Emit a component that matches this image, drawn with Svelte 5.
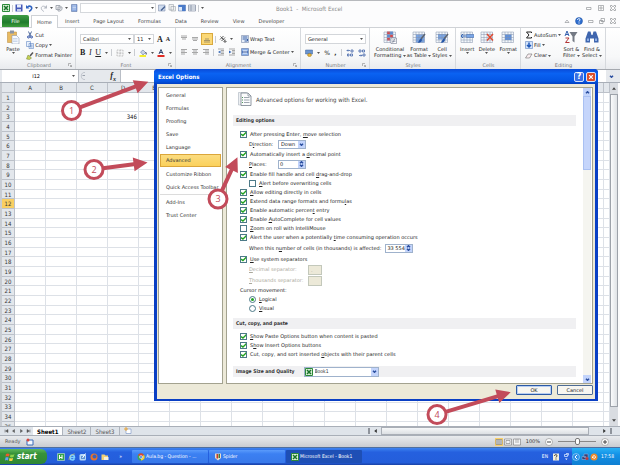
<script>
	const tabs = ['Insert', 'Page Layout', 'Formulas', 'Data', 'Review', 'View', 'Developer'];
	const columns = 'ABCDEFGHIJKLMNOPQRS'.split('');
	const rows = Array.from({ length: 35 }, (_, i) => i + 1);

	const sections = ['General', 'Formulas', 'Proofing', 'Save', 'Language', 'Advanced'];
	const more = ['Customize Ribbon', 'Quick Access Toolbar'];
	const last = ['Add-Ins', 'Trust Center'];

	// the letter between the bars is the access key
	const editing = [
		{ text: '|A|llow editing directly in cells', on: true },
		{ text: 'Extend data range formats and formu|l|as', on: true },
		{ text: 'Enable automatic percen|t| entry', on: true },
		{ text: 'Enable |A|utoComplete for cell values', on: true },
		{ text: '|Z|oom on roll with IntelliMouse', on: false },
		{ text: 'Alert the user when a potentially |t|ime consuming operation occurs', on: true }
	];
	const pasting = [
		{ text: '|S|how Paste Options button when content is pasted', on: true },
		{ text: 'S|h|ow Insert Options buttons', on: true },
		{ text: 'Cut, copy, and sort inserted |o|bjects with their parent cells', on: true }
	];

	const callouts = [
		{ n: 1, x: 71.5, y: 110.5, angle: -20.5, length: 82 },
		{ n: 2, x: 94, y: 169.5, angle: -7.4, length: 54 },
		{ n: 3, x: 218, y: 199, angle: -65, length: 46 },
		{ n: 4, x: 437, y: 414.5, angle: -16.8, length: 77 }
	];
</script>

{#snippet key(text)}
	{@const part = text.split('|')}
	{part[0]}<u>{part[1]}</u>{part[2]}
{/snippet}

{#snippet check(item)}
	<label class="row"><input type="checkbox" checked={item.on} /><span>{@render key(item.text)}</span></label>
{/snippet}

{#snippet caret()}
	<svg class="caret" viewBox="0 0 3 2"><path d="M0 0h3L1.500 2z" /></svg>
{/snippet}

{#snippet chevron(up = false)}
	<svg class="chevron" viewBox="0 0 6 4"><path d={up ? 'M1 3l2-2 2 2' : 'M1 1l2 2 2-2'} /></svg>
{/snippet}

{#snippet excel()}
	<svg class="i8" viewBox="0 0 16 16">
		<path d="M1 1h14v14H1z" fill="#d9f0d5" stroke="#2c8a3a" stroke-width="2" />
		<path d="M4 4l8 8M12 4l-8 8" stroke="#18722a" stroke-width="3" />
	</svg>
{/snippet}

{#snippet lines(kind)}
	<svg class="i8" viewBox="0 0 16 16">
		{#if kind === 'top'}
			<path d="M2 2h12M2 5h12M4 8h8" />
		{:else if kind === 'middle'}
			<path d="M2 5h12M2 8h12M4 11h8" />
		{:else if kind === 'bottom'}
			<path d="M4 8h8M2 11h12M2 14h12" />
		{:else if kind === 'left'}
			<path d="M2 3h12M2 6h8M2 9h12M2 12h8" />
		{:else if kind === 'center'}
			<path d="M2 3h12M4 6h8M2 9h12M4 12h8" />
		{:else if kind === 'right'}
			<path d="M2 3h12M6 6h8M2 9h12M6 12h8" />
		{:else}
			<path d="M2 2h12M8 5h6M8 8h6M8 11h6M2 14h12" />
			<path class="dent" d={kind === 'outdent' ? 'M7 5v6L2 8z' : 'M2 5v6l5-3z'} />
		{/if}
	</svg>
{/snippet}

{#snippet sheetIcon(kind)}
	<svg class="i14" viewBox="0 0 28 28">
		<path d="M2 4h23v21H2z" fill="#f3f7fc" />
		{#if kind === 'conditional'}
			<path d="M8 3h6v6H8zM14 9h6v6h-6zM8 15h6v6H8z" fill="#d9474c" />
			<path d="M14 3h6v6h-6zM8 9h6v6H8z" fill="#5b8ad6" />
		{:else if kind === 'table'}
			<path d="M8 9h17v16H8z" fill="#79a5e6" />
		{:else if kind === 'style'}
			<path d="M6 8h16v11H6z" fill="#79a5e6" />
		{:else if kind === 'format'}
			<path d="M8 9h13v11H8z" fill="#5d90de" />
		{/if}
		<path d="M2 4h23v21H2zM2 9h23M2 15h23M2 20h23M8 4v21M14 4v21M20 4v21" fill="none" stroke="#8291ab" />
		{#if kind === 'table' || kind === 'style'}
			<path d="M26 8l-8 10" stroke="#5c6470" stroke-width="3" />
			<path d="M18 17c-4 1-3 6-7 8 5 1 9-1 9-6z" fill="#2456a8" />
		{:else if kind === 'insert'}
			<path d="M13 9h15v6H13z" fill="#79a5e6" stroke="#456ba6" />
			<path d="M2 12h10M6 8l-4 4 4 4" stroke="#3668b8" stroke-width="2" fill="none" />
		{:else if kind === 'delete'}
			<path d="M14 8l12 13M26 8L14 21" stroke="#df4a32" stroke-width="3" />
		{:else if kind === 'conditional'}
			<path d="M16 16h11v11H16z" fill="#fff" stroke="#59657c" />
			<path d="M18 20h7M18 23h7M24 17l-5 9" stroke="#59657c" />
		{/if}
	</svg>
{/snippet}

{#snippet launcher()}
	<svg class="launcher" viewBox="0 0 8 8"><path d="M1 6V1h5M4 4l3 3M7 4v3H4" /></svg>
{/snippet}

<div class="desktop">
	<header class="titlebar">
		<div class="quick">
			{@render excel()}
			<i></i>
			<svg class="i8" viewBox="0 0 16 16"><path d="M1 1h14v14H1z" fill="#4659b8" /><path d="M4 1h8v6H4z" fill="#e9eefb" /><path d="M4 10h8v5H4z" fill="#c3cbea" /></svg>
			<svg class="i8" viewBox="0 0 16 16"><path d="M2 2v7h7z" fill="#2f63c0" /><path d="M5 6c5-4 10 0 8 4-1 3-3 4-5 5" fill="none" stroke="#2f63c0" stroke-width="3" /></svg>
			{@render caret()}
			<svg class="i8" viewBox="0 0 16 16"><path d="M14 2v7H7z" fill="#b5bac3" /><path d="M11 6C6 2 1 6 3 10c1 3 3 4 5 5" fill="none" stroke="#b5bac3" stroke-width="2" /></svg>
			{@render caret()}
			<svg class="i8" viewBox="0 0 16 16"><path d="M2 3h8v8H2zM6 6h8v5l-4 3H6z" fill="#f0f1f3" stroke="#a5aab3" stroke-width="2" /></svg>
			{@render caret()}
			<svg class="i8" viewBox="0 0 16 16"><path d="M3 1h11v14H3z" fill="#87a7df" stroke="#4e6799" /><path d="M5 4h7M5 7h7M5 10h7" stroke="#fff" /></svg>
			<div class="qcombo">{@render caret()}</div>
			<svg class="i8" viewBox="0 0 16 16"><path d="M1 2h13v12H1z" fill="#cfdcef" stroke="#6e7f9e" /><path d="M14 5L6 13" stroke="#47618f" stroke-width="3" /></svg>
			<svg class="i8" viewBox="0 0 16 16"><path d="M2 1h9v11H2zM6 5h9v9H6z" fill="#f1f1f1" stroke="#8d949f" /></svg>
			<svg class="i8" viewBox="0 0 16 16"><path d="M1 2h14v12H1z" fill="#dbe8fa" stroke="#5471a5" /><path d="M1 2h14v4H1zM8 6h7v8H8z" fill="#4b7bc9" /></svg>
			<svg class="i8" viewBox="0 0 16 16"><path d="M1 2h14v12H1z" fill="#f4f7fb" stroke="#5b6780" /><path d="M1 6h14M1 10h14M6 2v12" stroke="#5b6780" /></svg>
			<i></i>
			{@render caret()}
		</div>
		<h1>Book1 &nbsp;-&nbsp; Microsoft Excel</h1>
		<div class="winbuttons">
			<svg class="i6" viewBox="0 0 12 12"><path d="M1 5h9v4H1z" /></svg>
			<svg class="i6" viewBox="0 0 12 12"><path d="M1 1h10v10H1zM4 4h4v4H4z" /></svg>
			<svg class="i6" viewBox="0 0 12 12"><path d="M1 1h3l2 3 2-3h3v3L8 6l3 2v3H8L6 8l-2 3H1V8l3-2-3-2z" /></svg>
		</div>
	</header>

	<nav class="tabs">
		<button class="file">File</button>
		<button class="home">Home</button>
		{#each tabs as tab}<button>{tab}</button>{/each}
		<div class="winbuttons">
			<svg class="i6" viewBox="0 0 12 12"><path d="M2 9l4-5 4 5z" /></svg>
			<svg class="i8 about" viewBox="0 0 16 16"><circle cx="8" cy="8" r="7" fill="#2e6fd0" stroke="#1d4f9e" /><path d="M5 6c0-4 6-3 5 0 0 1-2 2-2 3M8 11v2" stroke-width="2" /></svg>
			<svg class="i6" viewBox="0 0 12 12"><path d="M1 5h9v4H1z" /></svg>
			<svg class="i6" viewBox="0 0 12 12"><path d="M4 1h7v6H4zM1 5h7v6H1z" /></svg>
			<svg class="i6" viewBox="0 0 12 12"><path d="M1 1h3l2 3 2-3h3v3L8 6l3 2v3H8L6 8l-2 3H1V8l3-2-3-2z" /></svg>
		</div>
	</nav>

	<div class="ribbon">
		<section class="group clipboard">
			<div class="tools">
				<button class="big">
					<svg class="i14" viewBox="0 0 28 28">
						<path d="M3 4h18v21H3z" fill="#e9bb62" stroke="#b4873a" />
						<path d="M8 1h8v6H8z" fill="#8a94a6" />
						<path d="M12 11h9l5 5v12H12z" fill="#f7faff" stroke="#7d8da8" />
						<path d="M14 17h9M14 20h9M14 23h9" stroke="#9fb4d6" />
					</svg>
					Paste {@render caret()}
				</button>
				<div class="stack">
					<button><svg class="i8" viewBox="0 0 16 16"><path d="M5 1l4 9M11 1L7 10" stroke="#506a9c" stroke-width="2" /><circle cx="5" cy="12" r="2" fill="none" stroke="#2d4fa6" stroke-width="2" /><circle cx="11" cy="12" r="2" fill="none" stroke="#2d4fa6" stroke-width="2" /></svg>Cut</button>
					<button><svg class="i8" viewBox="0 0 16 16"><path d="M1 1h8v10H1zM6 5h9v10H6z" fill="#eaf2fd" stroke="#4a74b8" /><path d="M8 8h5M8 10h5M8 12h5" stroke="#4a74b8" /></svg>Copy {@render caret()}</button>
					<button><svg class="i8" viewBox="0 0 16 16"><path d="M14 1L8 8" stroke="#555" stroke-width="3" /><path d="M4 6l7 6-4 3-6-1z" fill="#c4d154" stroke="#75802c" /></svg>Format Painter</button>
				</div>
			</div>
			<footer>Clipboard {@render launcher()}</footer>
		</section>

		<section class="group font">
			<div class="tools column">
				<div class="line">
					<div class="combo wide"><span>Calibri</span>{@render caret()}</div>
					<div class="combo size"><span>11</span>{@render caret()}</div>
					<b class="grow">A</b><b class="shrink">A</b>
				</div>
				<div class="line spread">
					<button class="serif"><b>B</b></button>
					<button class="serif"><em>I</em></button>
					<button class="serif"><u>U</u></button>
					{@render caret()}<i></i>
					<svg class="i8" viewBox="0 0 16 16"><path d="M2 2h12v12H2zM8 2v12M2 8h12" fill="none" stroke="#888" stroke-dasharray="2 1" /></svg>
					{@render caret()}<i></i>
					<svg class="i8" viewBox="0 0 16 16"><path d="M3 6l5-4 5 5-5 5z" fill="#c9d3e4" stroke="#526a96" /><path d="M13 6c3 2 2 5 1 5z" fill="#2f63c0" /><path d="M1 12h13v4H1z" fill="#f5ee2e" stroke="none" /></svg>
					{@render caret()}
					<svg class="i8" viewBox="0 0 16 16"><path d="M4 10l4-9 4 9M5 7h6" fill="none" stroke="#34466e" stroke-width="2" /><path d="M1 12h14v4H1z" fill="#e02a22" stroke="none" /></svg>
					{@render caret()}
				</div>
			</div>
			<footer>Font {@render launcher()}</footer>
		</section>

		<section class="group alignment">
			<div class="tools column">
				<div class="line">
					{@render lines('top')}{@render lines('middle')}<span class="hot">{@render lines('bottom')}</span><i></i>
					<svg class="i8" viewBox="0 0 16 16"><path d="M2 9l7-7M5 12l7-7M3 3l8 8M12 9v5M9 12l3 3 3-3" fill="none" stroke="#555" stroke-width="2" /></svg>
					{@render caret()}
					<button class="right"><svg class="i8" viewBox="0 0 16 16"><path d="M1 1h14v14H1z" fill="#e8effa" stroke="#5e7299" /><path d="M3 4h10M3 8h10v4H7" fill="none" stroke="#335ca5" stroke-width="2" /></svg>Wrap Text</button>
				</div>
				<div class="line">
					{@render lines('left')}{@render lines('center')}{@render lines('right')}<i></i>
					{@render lines('outdent')}{@render lines('indent')}
					<button class="right"><svg class="i8" viewBox="0 0 16 16"><path d="M1 1h14v14H1z" fill="#8cb0e8" stroke="#4a6394" /><path d="M4 5h8v6H4z" fill="#fff" /><path d="M2 8h12" stroke="#1e4796" stroke-width="2" /></svg>Merge &amp; Center {@render caret()}</button>
				</div>
			</div>
			<footer>Alignment {@render launcher()}</footer>
		</section>

		<section class="group number">
			<div class="tools column">
				<div class="combo"><span>General</span>{@render caret()}</div>
				<div class="line spread">
					<svg class="i8" viewBox="0 0 16 16"><path d="M1 2h14v8H1z" fill="#6a94cf" stroke="#3d609a" /><ellipse cx="9" cy="12" rx="4" ry="3" fill="#e6b53d" stroke="#94701a" /></svg>
					{@render caret()}
					<span class="percent">%</span><b class="percent">,</b><i></i>
					<svg class="i8" viewBox="0 0 16 16"><path d="M8 3H2M4 1L2 3l2 2M10 2h4v4h-4zM3 10h3v4H3zM9 10h4v4H9z" fill="none" stroke="#3b5fa5" stroke-width="1.500" /></svg>
					<svg class="i8" viewBox="0 0 16 16"><path d="M2 13h6M6 11l2 2-2 2M2 2h4v4H2zM9 2h4v4H9zM10 10h4v4h-4z" fill="none" stroke="#3b5fa5" stroke-width="1.500" /></svg>
				</div>
			</div>
			<footer>Number {@render launcher()}</footer>
		</section>

		<section class="group styles">
			<div class="tools">
				<button class="big">{@render sheetIcon('conditional')}Conditional<span>Formatting {@render caret()}</span></button>
				<button class="big">{@render sheetIcon('table')}Format<span>as Table {@render caret()}</span></button>
				<button class="big">{@render sheetIcon('style')}Cell<span>Styles {@render caret()}</span></button>
			</div>
			<footer>Styles</footer>
		</section>

		<section class="group cells">
			<div class="tools">
				<button class="big">{@render sheetIcon('insert')}Insert {@render caret()}</button>
				<button class="big">{@render sheetIcon('delete')}Delete {@render caret()}</button>
				<button class="big">{@render sheetIcon('format')}Format {@render caret()}</button>
			</div>
			<footer>Cells</footer>
		</section>

		<section class="group edit">
			<div class="tools">
				<div class="stack">
					<button><svg class="i8" viewBox="0 0 16 16"><path d="M13 4V2H3l5 6-5 6h10v-2" fill="none" stroke="#222" stroke-width="2" /></svg>AutoSum {@render caret()}</button>
					<button><svg class="i8" viewBox="0 0 16 16"><path d="M1 1h14v14H1z" fill="#d3e3fa" stroke="#4470b4" /><path d="M8 3v9M4 8l4 4 4-4" fill="none" stroke="#1f58b8" stroke-width="3" /></svg>Fill {@render caret()}</button>
					<button><svg class="i8" viewBox="0 0 16 16"><path d="M6 4h8l-5 8H1z" fill="#fbeef1" stroke="#555" /></svg>Clear {@render caret()}</button>
				</div>
				<button class="big">
					<svg class="i14" viewBox="0 0 28 28"><path d="M2 12L6 2l4 10M4 9h5" fill="none" stroke="#3560ae" stroke-width="2" /><path d="M3 16h7L3 25h8" fill="none" stroke="#b23636" stroke-width="2" /><path d="M11 4h16l-6 9v12l-4-3v-9z" fill="#747a84" /></svg>
					Sort &amp;<span>Filter {@render caret()}</span>
				</button>
				<button class="big">
					<svg class="i14" viewBox="0 0 28 28"><path d="M6 3h5l2 7h2l2-7h5l5 14v8h-9v-8h-8v8H1v-8z" fill="#3f66ae" /><path d="M4 17h4v5H4zM20 17h4v5h-4z" fill="#8fb0e6" /></svg>
					Find &amp;<span>Select {@render caret()}</span>
				</button>
			</div>
			<footer>Editing</footer>
		</section>
	</div>

	<div class="formula">
		<div class="name"><span>I12</span>{@render caret()}</div>
		<div class="fx"><svg class="i8" viewBox="0 0 16 16"><path d="M12 1C2 0 2 16 12 15" fill="none" stroke="#9aa1ac" /><path d="M7 7h5" stroke="#9aa1ac" stroke-width="2" /></svg><em>f<sub>x</sub></em></div>
		<input aria-label="Formula" />
		<div class="expand">{@render chevron()}</div>
	</div>

	<div class="sheet">
		<div class="grid">
			<table>
				<thead>
					<tr>
						<th class="corner"></th>
						{#each columns as c}<th>{c}</th>{/each}
						<th class="rest"></th>
					</tr>
				</thead>
				<tbody>
					{#each rows as r}
						<tr class:current={r === 12}>
							<th>{r}</th>
							{#each columns as c}<td>{r === 3 && c === 'D' ? '346' : ''}</td>{/each}
							<td></td>
						</tr>
					{/each}
				</tbody>
			</table>
		</div>
		<div class="vscroll">
			<span class="end"><svg viewBox="0 0 6 4"><path d="M0 4h6L3 0z" /></svg></span>
			<div class="thumb"></div>
			<span class="end"><svg viewBox="0 0 6 4"><path d="M0 0h6L3 4z" /></svg></span>
		</div>
	</div>

	<div class="sheettabs">
		<svg class="navs" viewBox="0 0 54 8"><path d="M2 1v6M8 1v6L3 4zM21 1v6l-4-3zM33 1v6l4-3zM46 1v6l5-3zM52 1v6" /></svg>
		<button class="active">Sheet1</button>
		<button>Sheet2</button>
		<button>Sheet3</button>
		<svg class="i8 new" viewBox="0 0 16 16"><path d="M4 4h10v9H4z" fill="#fff" stroke="#5c7fb8" /><path d="M4 0v8M0 4h8" stroke="#e9a63a" stroke-width="2" /></svg>
		<div class="hscroll">
			<span class="grip"></span>
			<svg viewBox="0 0 4 6"><path d="M4 0v6L0 3z" /></svg>
			<div class="thumb"></div>
			<svg viewBox="0 0 4 6"><path d="M0 0v6l4-3z" /></svg>
			<span class="grip"></span>
		</div>
	</div>

	<div class="status">
		<span>Ready</span>
		<svg class="i8" viewBox="0 0 16 16"><path d="M2 4h12v10H2z" fill="#f3f8ff" stroke="#3b6cb8" stroke-width="2" /><circle cx="4" cy="4" r="3" fill="#d8453d" /></svg>
		<div class="views">
			<svg class="i8 lit" viewBox="0 0 16 16"><path d="M2 3h12v10H2zM2 6h12M2 10h12M6 3v10M10 3v10" /></svg>
			<svg class="i8" viewBox="0 0 16 16"><path d="M1 2h14v12H1zM4 5h8v6H4z" /></svg>
			<svg class="i8" viewBox="0 0 16 16"><path d="M1 2h14v12H1zM6 2v8M10 2v8" /></svg>
		</div>
		<span class="zoom">100%</span>
		<svg class="i8" viewBox="0 0 16 16"><circle cx="8" cy="8" r="7" fill="#fff" stroke="#777" /><path d="M4 8h8" stroke="#444" stroke-width="2" /></svg>
		<div class="slider"><span></span></div>
		<svg class="i8" viewBox="0 0 16 16"><circle cx="8" cy="8" r="7" fill="#fff" stroke="#777" /><path d="M4 8h8M8 4v8" stroke="#444" stroke-width="2" /></svg>
	</div>

	<div class="taskbar">
		<button class="start">
			<svg class="i10" viewBox="0 0 20 20"><path d="M2 4c3-2 5-1 7 0L8 9C6 8 4 8 1 9z" fill="#ee5a2c" /><path d="M11 5c3 1 5 1 8-1l-2 6c-3 1-5 1-7 0z" fill="#8ad24b" /><path d="M1 11c2-1 4-1 6 0l-1 6c-2-2-4-1-6 0z" fill="#64a2f5" /><path d="M9 12c2 1 4 1 7 0l-1 5c-3 2-5 1-7 0z" fill="#fbd13e" /></svg>
			start
		</button>
		<div class="launch">
			<svg class="i8" viewBox="0 0 16 16"><path d="M1 1h14v14H1z" fill="#35a348" stroke="#e6f5e4" /><path d="M5 4v8M5 9h5V4M10 8v4" fill="none" stroke="#fff" stroke-width="2" /></svg>
			<svg class="i8" viewBox="0 0 16 16"><path d="M13 11c-3 5-9 3-9-2 0-7 9-7 9 0H5" fill="none" stroke="#7fd0ff" stroke-width="3" /><path d="M2 14C1 8 9 1 14 2" fill="none" stroke="#f3c643" /></svg>
			<svg class="i8" viewBox="0 0 16 16"><rect x="1" y="2" width="13" height="13" rx="3" fill="#b8d8f7" /><path d="M4 6h8v6H4z" fill="#5d93d4" /><path d="M13 1L7 10" stroke="#fff" stroke-width="2" /></svg>
			<svg class="i8" viewBox="0 0 16 16"><circle cx="8" cy="8" r="7" fill="#e8732a" /><circle cx="9" cy="7" r="4" fill="#3b62bd" /></svg>
			<svg class="i8" viewBox="0 0 16 16"><path d="M1 3h6l2 2h5v9H1z" fill="#f3d176" /><path d="M6 8h9v6H6z" fill="#f6f0dd" /></svg>
			<span class="more">»</span>
		</div>
		<button class="task"><svg class="i8" viewBox="0 0 16 16"><circle cx="8" cy="8" r="7" fill="#3ba757" /><path d="M8 8L2 4a7 7 0 0 1 12 0z" fill="#df4435" /><path d="M8 8l6-4a7 7 0 0 1-6 11z" fill="#f7cc3c" /><circle cx="8" cy="8" r="3" fill="#4a87ee" stroke="#fff" /></svg>Aula.bg - Question - ...</button>
		<button class="task"><svg class="i8" viewBox="0 0 16 16"><path d="M2 1h12v9l-6 5-6-5z" fill="#e9ddc9" /><path d="M5 2h3v9H5z" fill="#c33c2d" /><path d="M9 2h3v8H9z" fill="#3e7a3c" /></svg>Spider</button>
		<button class="task pressed">{@render excel()}Microsoft Excel - Book1</button>
		<span class="lang">EN</span>
		<svg class="i8" viewBox="0 0 16 16"><path d="M2 1h12v14H2z" fill="#f3efdc" /><path d="M5 6c0-4 6-3 5 0 0 1-2 2-2 3M8 11v2" fill="none" stroke="#333" stroke-width="2" /></svg>
		<svg class="i8" viewBox="0 0 16 16"><path d="M5 3h6v4H5zM8 1h5v4" fill="none" stroke="#dbe9ff" stroke-width="1.500" /><path d="M6 11h5l-2 3z" fill="#fff" /></svg>
		<div class="tray">
			<svg class="i8" viewBox="0 0 16 16"><circle cx="8" cy="8" r="7" fill="#2e90e8" stroke="#cfeaff" /><path d="M10 4L6 8l4 4" fill="none" stroke="#fff" stroke-width="2" /></svg>
			<svg class="i8" viewBox="0 0 16 16"><path d="M6 2h8v7H6zM2 7h8v6H2z" fill="#31437c" stroke="#a9b8dc" /><circle cx="12" cy="11" r="3" fill="#c23a3a" /></svg>
			<svg class="i8" viewBox="0 0 16 16"><circle cx="8" cy="8" r="7" fill="#ed8a2b" /><path d="M5 10c0-6 6-6 6-1 0 2-5 2-5 0" fill="none" stroke="#fff" stroke-width="2" /></svg>
			<time>17:58</time>
		</div>
	</div>

	<div class="dialog" role="dialog" aria-label="Excel Options">
		<header>
			<h2>Excel Options</h2>
			<button class="help">?</button>
			<button class="close" aria-label="Close"><svg viewBox="0 0 10 10"><path d="M2 2l6 6M8 2L2 8" stroke="#fff" stroke-width="2" /></svg></button>
		</header>
		<div class="body">
			<nav class="sections">
				{#each sections as s}<button class:selected={s === 'Advanced'}>{s}</button>{/each}
				<div class="block">{#each more as s}<button>{s}</button>{/each}</div>
				<div class="block ruled">{#each last as s}<button>{s}</button>{/each}</div>
			</nav>
			<div class="pane">
				<div class="content">
					<div class="intro">
						<svg viewBox="0 0 28 32"><path d="M1 3h16v25H1z" fill="#edf0f3" stroke="#9aa4b0" /><path d="M6 4h14l6 6v19H6z" fill="#fbfcfd" stroke="#6f7a86" stroke-width="1.500" /><path d="M20 4v6h6M12 13h11M12 18h11M12 23h11" fill="none" stroke="#7f8a96" stroke-width="1.500" /><path d="M8 13h2M8 18h2M8 23h2" stroke="#4f9a59" stroke-width="2" /></svg>
						Advanced options for working with Excel.
					</div>
					<h3>Editing options</h3>
					<div class="options">
						<div class="tall">
							{@render check({ text: 'After pressing Enter, |m|ove selection', on: true })}
							<div class="row sub">
								<label class="field" for="direction">D<u>i</u>rection:</label>
								<div class="select">
									<select id="direction"><option>Down</option></select>
									<span class="arrow">{@render chevron()}</span>
								</div>
							</div>
							{@render check({ text: 'Automatically insert a |d|ecimal point', on: true })}
							<div class="row sub">
								<label class="field" for="places"><u>P</u>laces:</label>
								<div class="select">
									<input id="places" value="0" />
									<span class="arrow">{@render chevron(true)}{@render chevron()}</span>
								</div>
							</div>
							{@render check({ text: 'Enable fill handle and cell |d|rag-and-drop', on: true })}
						</div>
						<div class="sub">{@render check({ text: '|A|lert before overwriting cells', on: false })}</div>
						{#each editing as item}{@render check(item)}{/each}
						<div class="row sub cells-limit">
							<label for="limit">When this n<u>u</u>mber of cells (in thousands) is affected:</label>
							<div class="select">
								<input id="limit" value="33 554" />
								<span class="arrow">{@render chevron(true)}{@render chevron()}</span>
							</div>
						</div>
						<div class="tall">{@render check({ text: '|U|se system separators', on: true })}</div>
						<div class="row sub off"><label for="decimal"><u>D</u>ecimal separator:</label><input id="decimal" value="." disabled /></div>
						<div class="row sub off"><label for="thousands"><u>T</u>housands separator:</label><input id="thousands" disabled /></div>
						<div class="row">Cursor movement:</div>
						<label class="row sub"><input type="radio" name="cursor" checked /><span><u>L</u>ogical</span></label>
						<label class="row sub"><input type="radio" name="cursor" /><span><u>V</u>isual</span></label>
					</div>
					<h3>Cut, copy, and paste</h3>
					<div class="options">
						{#each pasting as item}{@render check(item)}{/each}
					</div>
					<h3 class="with-select">
						<label for="book">Image Size and Quality</label>
						<span class="select book">
							{@render excel()}
							<select id="book"><option>Book1</option></select>
							<span class="arrow">{@render chevron()}</span>
						</span>
					</h3>
				</div>
				<div class="bar">
					<span class="cap">{@render chevron(true)}</span>
					<div class="thumb"></div>
					<span class="cap bottom">{@render chevron()}</span>
				</div>
			</div>
		</div>
		<footer>
			<button class="ok">OK</button>
			<button>Cancel</button>
		</footer>
	</div>

	<svg class="callouts">
		{#each callouts as c}
			<g transform="translate({c.x} {c.y})">
				<g transform="rotate({c.angle})">
					<path d="M9-2H{c.length - 14}V-7L{c.length} 0L{c.length - 14} 7V2H9z" />
				</g>
				<circle r="9" />
				<text y="3">{c.n}</text>
			</g>
		{/each}
	</svg>
</div>

<style>
	:global(body) {
		margin: 0;
		background: #fff;
	}

	.desktop {
		position: relative;
		display: flex;
		flex-direction: column;
		height: 100vh;
		overflow: hidden;
		box-sizing: border-box;
		font: 5px/7px 'DejaVu Sans', sans-serif;
		color: #222;
		background: #fcfcfd;
		border-top: 1px solid #b7b9bd;
	}

	button,
	input,
	select {
		font: inherit;
		color: inherit;
		margin: 0;
		padding: 0;
		border: 0;
		background: none;
		box-sizing: border-box;
		border-radius: 0;
	}

	svg {
		display: block;
		flex: none;
	}

	h1,
	h2,
	h3 {
		margin: 0;
		font-size: inherit;
	}

	h1,
	h2,
	h3,
	.intro,
	table,
	.sheettabs,
	.taskbar {
		font-family: 'DejaVu Sans Condensed', 'DejaVu Sans', sans-serif;
	}

	.i6 {
		width: 6px;
		height: 6px;
	}

	.i8 {
		width: 8px;
		height: 8px;
	}

	.i10 {
		width: 10px;
		height: 10px;
	}

	.i14 {
		width: 14px;
		height: 14px;
	}

	.caret {
		display: inline-block;
		width: 3px;
		height: 2px;
		fill: #555;
		vertical-align: middle;
	}

	.chevron {
		width: 5px;
		height: 3px;
		fill: none;
		stroke: #2b4fa0;
		stroke-width: 2px;
	}

	/* title bar and tabs */
	.titlebar {
		display: flex;
		align-items: center;
		height: 14px;
		padding: 0 4px 0 2px;
	}

	.quick {
		display: flex;
		align-items: center;
		gap: 2px;
	}

	.quick i,
	.line i {
		width: 1px;
		height: 7px;
		background: #c9ccd1;
	}

	.qcombo {
		display: flex;
		align-items: center;
		justify-content: flex-end;
		width: 76px;
		height: 10px;
		padding-right: 1px;
		box-sizing: border-box;
		border: 1px solid #d5d8dc;
		background: #fff;
	}

	.titlebar h1 {
		margin-left: 72px;
		font-size: 6px;
		font-weight: normal;
		color: #8a8a8a;
	}

	.winbuttons {
		display: flex;
		align-items: center;
		gap: 6px;
		margin-left: auto;
	}

	.winbuttons .i6 {
		fill: #fff;
		stroke: #6c7076;
	}

	.about {
		fill: none;
		stroke: #fff;
	}

	.tabs {
		display: flex;
		height: 12px;
		padding: 0 4px 0 2px;
		border-bottom: 1px solid #cfd2d6;
	}

	.tabs button {
		padding: 0 7px;
		color: #444;
	}

	.tabs .file {
		width: 27px;
		margin-right: 2px;
		padding: 0;
		border-radius: 2px 2px 0 0;
		background: linear-gradient(#3f9c45, #1f7a2c 60%, #3d9c3a);
		color: #fff;
	}

	.tabs .home {
		width: 27px;
		height: 13px;
		padding: 0;
		border: 1px solid #cfd2d6;
		border-bottom: 0;
		background: #fff;
	}

	.tabs .winbuttons {
		gap: 5px;
	}

	/* ribbon */
	.ribbon {
		display: flex;
		height: 41px;
		padding-left: 2px;
		border-bottom: 1px solid #a5a9af;
		background: linear-gradient(#fff, #f7f8f9 70%, #e9ebee);
	}

	.group {
		display: flex;
		flex-direction: column;
		box-sizing: border-box;
		padding: 2px 3px 0 4px;
		border-right: 1px solid #d6d9dd;
	}

	.clipboard {
		width: 74px;
	}

	.font {
		width: 100px;
	}

	.alignment {
		width: 125px;
	}

	.number {
		width: 69px;
	}

	.styles {
		width: 86px;
	}

	.cells {
		width: 65px;
	}

	.edit {
		width: 85px;
	}

	.tools {
		display: flex;
		flex: 1;
		justify-content: space-between;
	}

	.column {
		flex-direction: column;
		justify-content: space-evenly;
	}

	.group footer {
		display: flex;
		align-items: center;
		justify-content: center;
		position: relative;
		height: 8px;
		color: #7a7d82;
	}

	.launcher {
		position: absolute;
		right: 0;
		width: 4px;
		height: 4px;
		fill: none;
		stroke: #777;
	}

	.big {
		display: flex;
		flex-direction: column;
		align-items: center;
		line-height: 6px;
		white-space: nowrap;
	}

	.big svg.i14 {
		margin-bottom: 2px;
	}

	.stack {
		display: flex;
		flex-direction: column;
		justify-content: space-around;
		align-items: flex-start;
	}

	.stack button,
	.right {
		display: flex;
		align-items: center;
		gap: 1px;
		white-space: nowrap;
	}

	.line {
		display: flex;
		align-items: center;
		gap: 3px;
	}

	.line > .i8 {
		stroke: #555;
	}

	.dent {
		fill: #3668b8;
		stroke: none;
	}

	.spread {
		justify-content: space-between;
	}

	.alignment .right {
		width: 56px;
		margin-left: auto;
	}

	.percent {
		font-size: 6px;
	}

	.hot {
		margin: -2px -1px;
		padding: 1px;
		border: 1px solid #d9a93d;
		background: #fbd876;
	}

	.hot svg {
		stroke: #555;
	}

	.combo {
		display: flex;
		align-items: center;
		justify-content: space-between;
		height: 10px;
		padding: 0 2px;
		box-sizing: border-box;
		border: 1px solid #d3d6da;
		background: #fff;
	}

	.wide {
		width: 54px;
	}

	.size {
		width: 20px;
		margin-left: -3px;
	}

	.grow,
	.shrink,
	.serif {
		font-family: 'Liberation Serif', serif;
		font-size: 8px;
	}

	.shrink {
		font-size: 6px;
	}

	/* formula bar */
	.formula {
		display: flex;
		height: 12px;
		padding-left: 2px;
		background: #e6e9ed;
		border-bottom: 1px solid #a9afb8;
	}

	.name {
		display: flex;
		align-items: center;
		justify-content: flex-end;
		gap: 32px;
		width: 77px;
		padding-right: 3px;
		box-sizing: border-box;
		border-right: 1px solid #b9bec6;
		background: #fff;
		color: #111;
	}

	.fx {
		display: flex;
		align-items: center;
		justify-content: space-between;
		width: 42px;
		padding-right: 4px;
		box-sizing: border-box;
		border-right: 1px solid #b9bec6;
		font-family: 'Liberation Serif', serif;
		font-size: 8px;
		font-weight: bold;
	}

	.fx sub {
		font-size: 6px;
		line-height: 1px;
	}

	.formula input {
		flex: 1;
		background: #fff;
	}

	.expand {
		display: flex;
		align-items: center;
		justify-content: center;
		width: 10px;
		margin-right: 4px;
	}

	/* grid */
	.sheet {
		display: flex;
		flex: 1;
		min-height: 0;
		border-left: 2px solid #c8ccd2;
	}

	.grid {
		flex: 1;
		overflow: hidden;
		background: #fff;
	}

	table {
		width: 100%;
		height: 349px;
		table-layout: fixed;
		border-collapse: separate;
		border-spacing: 0;
	}

	th,
	td {
		width: 31px;
		padding: 0;
		box-sizing: border-box;
		border-right: 1px solid #dde1e7;
		border-bottom: 1px solid #dde1e7;
		line-height: 7px;
	}

	th {
		font-weight: normal;
		font-size: 6px;
		color: #333;
		background: #e3e7ec;
		border-color: #bcc1c9;
	}

	thead th {
		height: 10px;
	}

	.corner {
		width: 13px;
	}

	.rest {
		width: auto;
	}

	td {
		text-align: right;
		padding-right: 1px;
		font-size: 6px;
		color: #111;
	}

	.current th {
		background: #f9cf62;
	}

	.vscroll {
		display: flex;
		flex-direction: column;
		width: 8px;
		margin-right: 2px;
		background: #d9dce1;
	}

	.end {
		display: flex;
		align-items: center;
		justify-content: center;
		height: 11px;
	}

	.end svg {
		width: 4px;
		height: 3px;
		fill: #444;
	}

	.vscroll .thumb {
		flex: 1;
		margin-bottom: 8px;
		border: 1px solid #9da2aa;
		background: linear-gradient(90deg, #fafbfc, #dfe2e6);
	}

	/* sheet tabs */
	.sheettabs {
		display: flex;
		align-items: center;
		height: 8px;
		padding-left: 4px;
		background: #dfe4ea;
		font-size: 6px;
		border-top: 1px solid #a9afb8;
	}

	.navs {
		width: 27px;
		height: 4px;
		margin-right: 2px;
		fill: #555;
		stroke: #555;
	}

	.sheettabs button {
		height: 8px;
		padding: 0 4px;
		border-right: 1px solid #aeb4bd;
		color: #555;
		line-height: 7px;
	}

	.sheettabs .active {
		background: #fff;
		color: #000;
		font-weight: bold;
	}

	.new {
		margin-left: 4px;
	}

	.hscroll {
		display: flex;
		align-items: center;
		gap: 4px;
		width: 244px;
		margin-left: auto;
		margin-right: 8px;
	}

	.hscroll svg {
		width: 3px;
		height: 4px;
		fill: #333;
	}

	.hscroll .thumb {
		flex: 1;
		height: 6px;
		margin-right: 10px;
		border: 1px solid #a9aeb6;
		background: linear-gradient(#f7f8f9, #dcdfe3);
	}

	.grip {
		width: 2px;
		height: 6px;
		border: 1px solid #8f949c;
		box-sizing: border-box;
	}

	.status {
		display: flex;
		align-items: center;
		gap: 5px;
		height: 11px;
		padding: 0 11px 0 5px;
		background: linear-gradient(#e9ebee, #c9ccd1);
		border-top: 1px solid #a9afb8;
		border-bottom: 1px solid #4f6f9f;
		color: #555;
	}

	.views {
		display: flex;
		gap: 1px;
		margin-left: auto;
	}

	.views svg {
		fill: #f4f5f7;
		stroke: #666;
	}

	.views .lit {
		background: #fbd066;
	}

	.zoom {
		color: #333;
	}

	.slider {
		display: flex;
		justify-content: center;
		width: 38px;
		height: 1px;
		background: #888;
	}

	.slider span {
		width: 3px;
		height: 5px;
		margin-top: -3px;
		border: 1px solid #777;
		border-radius: 2px;
		background: #fff;
	}

	/* task bar */
	.taskbar {
		display: flex;
		align-items: center;
		height: 17px;
		background: linear-gradient(#3d83f0, #2560df 25%, #245edb 85%, #1941a5);
		color: #fff;
	}

	.start {
		display: flex;
		align-items: center;
		gap: 2px;
		width: 47px;
		height: 15px;
		padding-left: 5px;
		border-radius: 0 6px 6px 0;
		background: linear-gradient(#5cb85c, #37923a 30%, #2f8733);
		font-size: 8px;
		font-weight: bold;
		font-style: italic;
	}

	.launch {
		display: flex;
		align-items: center;
		gap: 3px;
		width: 85px;
		padding-left: 10px;
		box-sizing: border-box;
	}

	.more {
		margin-left: auto;
		margin-right: 10px;
	}

	.task {
		display: flex;
		align-items: center;
		gap: 1px;
		width: 76px;
		height: 13px;
		margin-right: 1px;
		padding-left: 5px;
		border-radius: 1px;
		background: linear-gradient(#5a9bfb, #3c80f2 30%, #3879ea);
		white-space: nowrap;
	}

	.pressed {
		background: #1e4fb5;
	}

	.lang {
		margin-left: auto;
		margin-right: 4px;
	}

	.taskbar > .i8 {
		margin-right: 2px;
	}

	.tray {
		display: flex;
		align-items: center;
		gap: 1px;
		height: 17px;
		padding-right: 6px;
		background: linear-gradient(#2ab1f5, #1291e6 40%, #0f7fd2);
	}

	.tray time {
		margin-left: 2px;
	}

	/* options window */
	.dialog {
		position: absolute;
		left: 154px;
		top: 68px;
		right: 22px;
		height: 332px;
		display: flex;
		flex-direction: column;
		box-sizing: border-box;
		padding: 0 3px 2px;
		border-radius: 4px 4px 0 0;
		background: #0a3fc4;
	}

	.dialog > header {
		display: flex;
		align-items: center;
		gap: 2px;
		height: 15px;
		margin: 0 -3px;
		padding: 0 2px 0 4px;
		border-radius: 4px 4px 0 0;
		background: linear-gradient(#0a4bd8, #0a62f2 30%, #0355e4 80%, #0340c0);
	}

	h2 {
		flex: 1;
		font-size: 6px;
		color: #fff;
	}

	.help,
	.close {
		display: flex;
		align-items: center;
		justify-content: center;
		width: 10px;
		height: 10px;
		border: 1px solid #d6e2fb;
		border-radius: 2px;
		background: #3a6fe4;
		color: #fff;
		font-size: 8px;
		font-weight: bold;
	}

	.close {
		background: #dc4f2b;
	}

	.close svg {
		width: 6px;
		height: 6px;
	}

	.body {
		display: flex;
		flex: 1;
		min-height: 0;
		gap: 3px;
		padding: 3px 2px 1px 1px;
		background: #ece9d8;
	}

	.sections {
		width: 65px;
		box-sizing: border-box;
		padding: 1px;
		border: 1px solid #a3a28f;
		background: #fff;
		color: #333;
	}

	.sections button {
		display: block;
		width: 100%;
		height: 13px;
		padding-left: 6px;
		text-align: left;
		white-space: nowrap;
	}

	.sections .selected {
		border: 1px solid #dba63a;
		padding-left: 5px;
		background: linear-gradient(#fbdc80, #fbd15c);
	}

	.block {
		padding-top: 1px;
	}

	.ruled {
		border-top: 1px solid #dcdcdc;
	}

	.pane {
		display: flex;
		flex: 1;
		min-width: 0;
		border: 1px solid #a3a28f;
		background: #fff;
	}

	.content {
		flex: 1;
		min-width: 0;
		padding: 1px 7px 0 6px;
		overflow: hidden;
	}

	.intro {
		display: flex;
		align-items: center;
		gap: 4px;
		height: 20px;
		margin-bottom: 6px;
		padding-left: 5px;
		font-size: 6px;
		color: #444;
	}

	.intro svg {
		width: 14px;
		height: 16px;
	}

	h3 {
		display: flex;
		align-items: center;
		height: 11px;
		padding-left: 3px;
		background: #f0f0f2;
		color: #333;
	}

	.options {
		padding: 3px 0 5px 7px;
	}

	.row {
		display: flex;
		align-items: center;
		height: 9px;
		white-space: nowrap;
	}

	.tall .row {
		height: 10px;
	}

	.sub {
		padding-left: 9px;
	}

	.cells-limit {
		height: 12px;
	}

	.off {
		height: 11px;
		color: #aaa89c;
	}

	.off label {
		width: 59px;
	}

	.off input {
		width: 14px;
		height: 10px;
		padding-left: 2px;
		border: 1px solid #c3c8bb;
		background: #ece9d8;
	}

	input[type='checkbox'],
	input[type='radio'] {
		appearance: none;
		width: 7px;
		height: 7px;
		margin-right: 3px;
		border: 1px solid #4d7a88;
		background: #fff;
	}

	input[type='radio'] {
		border-radius: 50%;
	}

	input[type='checkbox']:checked::before {
		content: '';
		display: block;
		width: 5px;
		height: 5px;
		background: #21a121;
		clip-path: polygon(0 40%, 40% 60%, 100% 0, 100% 40%, 40% 100%, 0 70%);
	}

	input[type='radio']:checked::before {
		content: '';
		display: block;
		width: 3px;
		height: 3px;
		margin: 1px;
		border-radius: 50%;
		background: #21a121;
	}

	.field {
		width: 29px;
	}

	.select {
		display: flex;
		width: 28px;
		height: 9px;
		box-sizing: border-box;
		border: 1px solid #9fb2cc;
		background: #fff;
	}

	.cells-limit .select {
		margin-left: 4px;
	}

	.select select,
	.select input {
		appearance: none;
		flex: 1;
		min-width: 0;
		padding-left: 2px;
		line-height: 7px;
	}

	.select input {
		padding-left: 1px;
	}

	.arrow {
		display: flex;
		flex-direction: column;
		align-items: center;
		justify-content: center;
		width: 7px;
		background: #c3d4fb;
	}

	.book {
		width: 75px;
		height: 10px;
		align-items: center;
		margin-left: 9px;
		font-weight: normal;
	}

	.book .arrow {
		height: 8px;
	}

	.with-select {
		margin-top: 2px;
	}

	.bar {
		display: flex;
		flex-direction: column;
		width: 8px;
		margin-right: 1px;
		background: #f5f5f0;
	}

	.cap {
		display: flex;
		align-items: center;
		justify-content: center;
		height: 8px;
		background: #c3d4fb;
	}

	.bar .thumb {
		height: 74px;
		box-sizing: border-box;
		border: 1px solid #a9c0f2;
		background: #c5d5fb;
	}

	.bottom {
		margin-top: auto;
	}

	.dialog > footer {
		display: flex;
		justify-content: flex-end;
		gap: 5px;
		height: 14px;
		padding: 0 2px 0 0;
		background: #ece9d8;
	}

	.dialog > footer button {
		width: 36px;
		height: 10px;
		border: 1px solid #4e6c95;
		border-radius: 1px;
		background: #f7f6f1;
	}

	.dialog > footer .ok {
		border-color: #2c5aa5;
		box-shadow: inset 0 0 0 1px #b7cdf2;
	}

	/* numbered pointers */
	.callouts {
		position: absolute;
		inset: -1px 0 0;
		width: 100%;
		height: 100vh;
		pointer-events: none;
		fill: #c24b5a;
	}

	.callouts circle {
		fill: #fff;
		stroke: #c24b5a;
		stroke-width: 3px;
	}

	.callouts text {
		font: 9px 'Open Sans', sans-serif;
		text-anchor: middle;
	}
</style>
